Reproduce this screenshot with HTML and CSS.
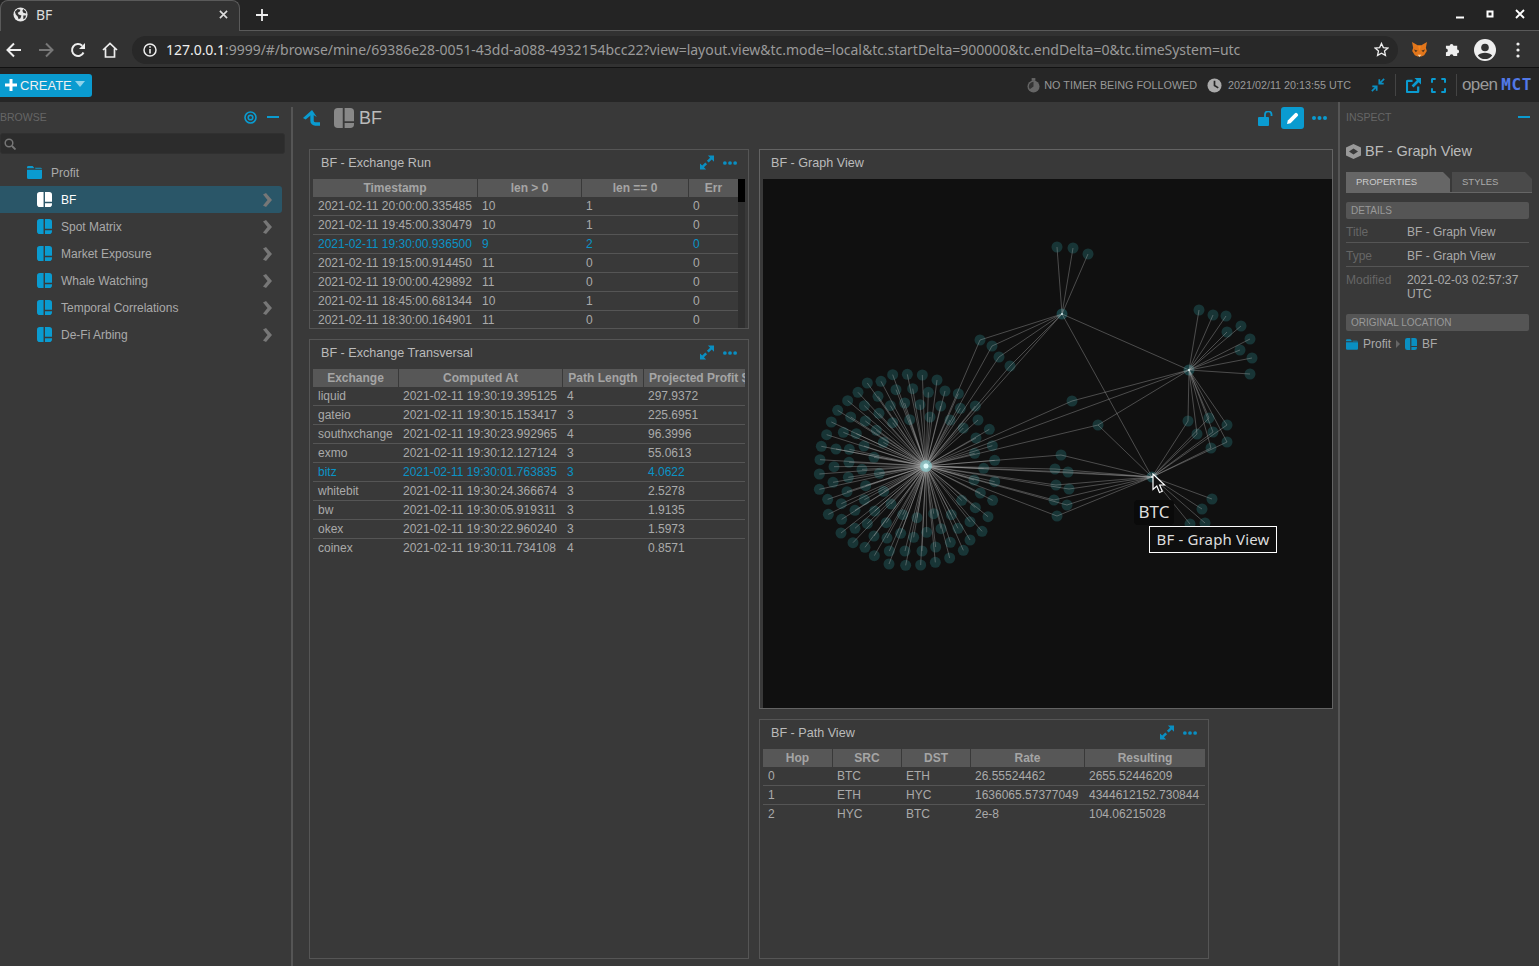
FILE: index.html
```html
<!DOCTYPE html>
<html lang="en">
<head>
<meta charset="utf-8">
<title>BF</title>
<link rel="stylesheet" href="styles.css">
</head>
<body>
<svg class="sprite" width="0" height="0" aria-hidden="true">
  <symbol id="i-layout" viewBox="0 0 16 16">
    <path d="M7 0v16H3a3 3 0 0 1-3-3V3a3 3 0 0 1 3-3zM8.500 0H13a3 3 0 0 1 3 3v7.500H8.500zM8.500 12H16v1a3 3 0 0 1-3 3H8.500z" fill="currentColor"/>
  </symbol>
  <symbol id="i-folder" viewBox="0 0 16 14">
    <path d="M0 1.500A1.500 1.500 0 0 1 1.500 0H6l2 2.500H0zM0 4h16v8.500A1.500 1.500 0 0 1 14.500 14h-13A1.500 1.500 0 0 1 0 12.500zM8.500 2H14.500A1.500 1.500 0 0 1 16 3H9z" fill="currentColor"/>
  </symbol>
  <symbol id="i-chevron" viewBox="0 0 10 14">
    <path d="M1 1.500l3-1.500 6 7-6 7-3-1.500 4.500-5.500z" fill="currentColor"/>
  </symbol>
  <symbol id="i-expand" viewBox="0 0 16 16">
    <path d="M9 0h7v7l-2.500-2.500-3.600 3.600-2-2 3.600-3.600zM7 16H0V9l2.500 2.500 3.600-3.600 2 2-3.600 3.600z" fill="currentColor"/>
  </symbol>
  <symbol id="i-dots" viewBox="0 0 15 4">
    <circle cx="2" cy="2" r="2" fill="currentColor"/><circle cx="7.500" cy="2" r="2" fill="currentColor"/><circle cx="13" cy="2" r="2" fill="currentColor"/>
  </symbol>
</svg>

<header class="tabstrip">
  <div class="tab">
    <svg class="favicon" viewBox="0 0 16 16"><circle cx="8" cy="8" r="7.500" fill="#e8e8e8"/><path d="M2 5l3-3 3 1-1 2-2 1 1 2 3 1-1 3-2 1-1-3-2-2zM11 2l3 3v2l-3-1-1-2zM11 9l3 0-1 3-2 1z" fill="#333"/></svg>
    <span class="tab-title">BF</span>
    <svg class="tab-close" viewBox="0 0 10 10"><path d="M1 1l8 8M9 1l-8 8" stroke="#ddd" stroke-width="1.800"/></svg>
  </div>
  <svg class="tab-new" viewBox="0 0 12 12"><path d="M6 0v12M0 6h12" stroke="#eee" stroke-width="1.800"/></svg>
  <div class="winctl">
    <svg viewBox="0 0 10 10"><path d="M1 8.500h8" stroke="#fff" stroke-width="2"/></svg>
    <svg viewBox="0 0 10 10"><rect x="2.500" y="2.500" width="5" height="5" fill="none" stroke="#fff" stroke-width="2"/></svg>
    <svg viewBox="0 0 10 10"><path d="M1 1l8 8M9 1l-8 8" stroke="#fff" stroke-width="1.800"/></svg>
  </div>
</header>

<nav class="toolbar">
  <svg class="tb-ico" viewBox="0 0 16 16"><path d="M15 8H2M8 1.500L1.500 8 8 14.500" fill="none" stroke="#eee" stroke-width="2"/></svg>
  <svg class="tb-ico" viewBox="0 0 16 16"><path d="M1 8h13M8 1.500L14.500 8 8 14.500" fill="none" stroke="#777" stroke-width="2"/></svg>
  <svg class="tb-ico" viewBox="0 0 16 16"><path d="M13.500 10.500A6 6 0 1 1 12.200 3.700" fill="none" stroke="#eee" stroke-width="2"/><path d="M15 1v6H9z" fill="#eee"/></svg>
  <svg class="tb-ico" viewBox="0 0 16 16"><path d="M1 8l7-6.500L15 8M3.500 6.500V15h9V6.500" fill="none" stroke="#eee" stroke-width="1.700"/></svg>
  <div class="omnibox">
    <svg class="omni-info" viewBox="0 0 14 14"><circle cx="7" cy="7" r="6" fill="none" stroke="#eee" stroke-width="1.500"/><path d="M7 6v4.500M7 3.200v1.600" stroke="#eee" stroke-width="1.600"/></svg>
    <span class="url"><span class="url-host">127.0.0.1</span>:9999/#/browse/mine/69386e28-0051-43dd-a088-4932154bcc22?view=layout.view&amp;tc.mode=local&amp;tc.startDelta=900000&amp;tc.endDelta=0&amp;tc.timeSystem=utc</span>
    <svg class="omni-star" viewBox="0 0 16 16"><path d="M8 1.500l2 4.400 4.800.5-3.600 3.200 1 4.700L8 11.900l-4.200 2.400 1-4.700L1.200 6.400 6 5.900z" fill="none" stroke="#eee" stroke-width="1.400"/></svg>
  </div>
  <svg class="ext-fox" viewBox="0 0 18 16"><path d="M1 0l6 3.500h4L17 0l-1.200 6 1 3.500-2.800 4.500-3 1.500H7L4 14 1.200 9.500l1-3.500z" fill="#e2761b"/><path d="M3 8l4 1-2 2zM15 8l-4 1 2 2z" fill="#5a3a1c"/><path d="M7 13.500h4L9 16z" fill="#f5d6b0"/><path d="M7.500 4h3L9 10z" fill="#f6851b"/></svg>
  <svg class="ext-puzzle" viewBox="0 0 16 16"><path d="M1 4h4a2 2 0 1 1 4 0h4v4a2 2 0 1 1 0 4v3H9a2 2 0 1 0-4 0H1v-4a2 2 0 1 0 0-4z" fill="#eee"/></svg>
  <svg class="avatar" viewBox="0 0 22 22"><circle cx="11" cy="11" r="11" fill="#eee"/><circle cx="11" cy="8.500" r="3.800" fill="#333"/><path d="M3.800 16.500c3-3.800 11.400-3.800 14.400 0a9 9 0 0 1-14.400 0z" fill="#333"/></svg>
  <svg class="kebab" viewBox="0 0 4 16"><circle cx="2" cy="2" r="1.600" fill="#eee"/><circle cx="2" cy="8" r="1.600" fill="#eee"/><circle cx="2" cy="14" r="1.600" fill="#eee"/></svg>
</nav>

<div class="apphead">
  <button class="create"><svg class="create-plus" viewBox="0 0 12 12"><path d="M6 0v12M0 6h12" stroke="#fff" stroke-width="3"/></svg>CREATE<span class="create-caret"></span></button>
  <div class="status">
    <svg class="st-timer" viewBox="0 0 14 16"><circle cx="7" cy="9" r="6.500" fill="#666"/><rect x="5" y="0" width="4" height="3" fill="#666"/><path d="M7 9V4a5 5 0 0 0-4 8z" fill="#333"/></svg>
    <span class="st-text st-timer-text">NO TIMER BEING FOLLOWED</span>
    <svg class="st-clock" viewBox="0 0 16 16"><circle cx="8" cy="8" r="7.500" fill="#aaa"/><path d="M8 3v5l4 2.500" fill="none" stroke="#252525" stroke-width="1.800"/></svg>
    <span class="st-text st-date">2021/02/11 20:13:55 UTC</span>
    <svg class="st-ico st-compress" viewBox="0 0 16 16"><path d="M15 1l-5 5M9.500 1.500V6.500h5M1 15l5-5M6.500 14.500V9.500h-5" fill="none" stroke="#0a8fc2" stroke-width="2"/></svg>
    <span class="st-sep st-sep-a"></span>
    <svg class="st-ico st-newtab" viewBox="0 0 16 16"><path d="M7 3H2a1 1 0 0 0-1 1v10a1 1 0 0 0 1 1h10a1 1 0 0 0 1-1V9" fill="none" stroke="#0a9bd0" stroke-width="2.400"/><path d="M9 0h7v7l-2.500-2.500L8 10 6 8l5.500-5.500z" fill="#0a9bd0"/></svg>
    <svg class="st-ico st-full" viewBox="0 0 16 16"><path d="M1 5V2a1 1 0 0 1 1-1h3M11 1h3a1 1 0 0 1 1 1v3M15 11v3a1 1 0 0 1-1 1h-3M5 15H2a1 1 0 0 1-1-1v-3" fill="none" stroke="#0a9bd0" stroke-width="2.200"/></svg>
    <span class="st-sep st-sep-b"></span>
    <span class="logo"><span class="logo-open">open</span><span class="logo-mct">MCT</span></span>
  </div>
</div>

<main class="workspace">
  <aside class="browse">
    <div class="pane-head">
      <span class="pane-label">BROWSE</span>
      <span class="pane-tools">
        <svg class="pane-target" viewBox="0 0 13 13"><circle cx="6.500" cy="6.500" r="5.500" fill="none" stroke="#0a9bd0" stroke-width="1.600"/><circle cx="6.500" cy="6.500" r="2.300" fill="none" stroke="#0a9bd0" stroke-width="1.600"/></svg>
        <span class="pane-min"></span>
      </span>
    </div>
    <div class="search">
      <svg viewBox="0 0 12 12"><circle cx="5" cy="5" r="3.800" fill="none" stroke="#777" stroke-width="1.500"/><path d="M8 8l3.500 3.500" stroke="#777" stroke-width="1.800"/></svg>
    </div>
    <ul class="tree">
      <li class="tree-row tree-root"><svg class="tree-folder"><use href="#i-folder"/></svg><span>Profit</span></li>
      <li class="tree-row tree-item is-selected"><svg class="tree-ico"><use href="#i-layout"/></svg><span class="tree-name">BF</span><svg class="tree-arrow"><use href="#i-chevron"/></svg></li>
      <li class="tree-row tree-item"><svg class="tree-ico"><use href="#i-layout"/></svg><span class="tree-name">Spot Matrix</span><svg class="tree-arrow"><use href="#i-chevron"/></svg></li>
      <li class="tree-row tree-item"><svg class="tree-ico"><use href="#i-layout"/></svg><span class="tree-name">Market Exposure</span><svg class="tree-arrow"><use href="#i-chevron"/></svg></li>
      <li class="tree-row tree-item"><svg class="tree-ico"><use href="#i-layout"/></svg><span class="tree-name">Whale Watching</span><svg class="tree-arrow"><use href="#i-chevron"/></svg></li>
      <li class="tree-row tree-item"><svg class="tree-ico"><use href="#i-layout"/></svg><span class="tree-name">Temporal Correlations</span><svg class="tree-arrow"><use href="#i-chevron"/></svg></li>
      <li class="tree-row tree-item"><svg class="tree-ico"><use href="#i-layout"/></svg><span class="tree-name">De-Fi Arbing</span><svg class="tree-arrow"><use href="#i-chevron"/></svg></li>
    </ul>
  </aside>

  <section class="center">
    <div class="objhead">
      <svg class="obj-back" viewBox="0 0 16 15"><path d="M16 13.200H11.500a3 3 0 0 1-3-3V3" fill="none" stroke="#0a9bd0" stroke-width="3.200"/><path d="M0 7.500L8.500 0 13 6.500 8.500 4 2.500 9z" fill="#0a9bd0"/></svg>
      <svg class="obj-ico"><use href="#i-layout"/></svg>
      <span class="obj-title">BF</span>
      <span class="obj-actions">
        <svg class="obj-lock" viewBox="0 0 15 15"><rect x="0" y="6" width="11" height="9" rx="1" fill="#0a9bd0"/><path d="M7 6V3.500a3 3 0 0 1 6.500 0V5" fill="none" stroke="#0a9bd0" stroke-width="1.800"/></svg>
        <span class="obj-edit"><svg viewBox="0 0 12 12"><path d="M0 12l.8-3.500L8 1.300a1.500 1.500 0 0 1 2.100 0l.6.6a1.500 1.500 0 0 1 0 2.100L3.500 11.200z" fill="#fff"/></svg></span>
        <svg class="obj-dots"><use href="#i-dots"/></svg>
      </span>
    </div>
    <div class="layout">
      <div class="col col-left">
        <article class="frame frame-run">
          <div class="frame-head"><span>BF - Exchange Run</span><span class="frame-tools"><svg class="fr-expand"><use href="#i-expand"/></svg><svg class="fr-dots"><use href="#i-dots"/></svg></span></div>
          <div class="tbl-wrap">
            <table class="tbl tbl-run">
              <thead><tr><th>Timestamp</th><th>len &gt; 0</th><th>len == 0</th><th>Err</th></tr></thead>
              <tbody>
                <tr><td>2021-02-11 20:00:00.335485</td><td>10</td><td>1</td><td>0</td></tr>
                <tr><td>2021-02-11 19:45:00.330479</td><td>10</td><td>1</td><td>0</td></tr>
                <tr class="is-hot"><td>2021-02-11 19:30:00.936500</td><td>9</td><td>2</td><td>0</td></tr>
                <tr><td>2021-02-11 19:15:00.914450</td><td>11</td><td>0</td><td>0</td></tr>
                <tr><td>2021-02-11 19:00:00.429892</td><td>11</td><td>0</td><td>0</td></tr>
                <tr><td>2021-02-11 18:45:00.681344</td><td>10</td><td>1</td><td>0</td></tr>
                <tr><td>2021-02-11 18:30:00.164901</td><td>11</td><td>0</td><td>0</td></tr>
              </tbody>
            </table>
            <div class="scrollbar"><div class="scroll-thumb"></div></div>
          </div>
        </article>
        <article class="frame frame-trans">
          <div class="frame-head"><span>BF - Exchange Transversal</span><span class="frame-tools"><svg class="fr-expand"><use href="#i-expand"/></svg><svg class="fr-dots"><use href="#i-dots"/></svg></span></div>
          <table class="tbl tbl-trans">
            <thead><tr><th>Exchange</th><th>Computed At</th><th>Path Length</th><th>Projected Profit $</th></tr></thead>
            <tbody>
              <tr><td>liquid</td><td>2021-02-11 19:30:19.395125</td><td>4</td><td>297.9372</td></tr>
              <tr><td>gateio</td><td>2021-02-11 19:30:15.153417</td><td>3</td><td>225.6951</td></tr>
              <tr><td>southxchange</td><td>2021-02-11 19:30:23.992965</td><td>4</td><td>96.3996</td></tr>
              <tr><td>exmo</td><td>2021-02-11 19:30:12.127124</td><td>3</td><td>55.0613</td></tr>
              <tr class="is-hot"><td>bitz</td><td>2021-02-11 19:30:01.763835</td><td>3</td><td>4.0622</td></tr>
              <tr><td>whitebit</td><td>2021-02-11 19:30:24.366674</td><td>3</td><td>2.5278</td></tr>
              <tr><td>bw</td><td>2021-02-11 19:30:05.919311</td><td>3</td><td>1.9135</td></tr>
              <tr><td>okex</td><td>2021-02-11 19:30:22.960240</td><td>3</td><td>1.5973</td></tr>
              <tr><td>coinex</td><td>2021-02-11 19:30:11.734108</td><td>4</td><td>0.8571</td></tr>
            </tbody>
          </table>
        </article>
      </div>
      <div class="col col-right">
        <article class="frame frame-graph">
          <div class="frame-head"><span>BF - Graph View</span></div>
          <div class="graph" id="graph">
            <div class="graph-label">BTC</div>
            <svg class="cursor" viewBox="0 0 14 21"><path d="M1 1v15.500l3.800-3.500 2.700 6.500 2.800-1.200-2.700-6.300h5z" fill="#111" stroke="#fff" stroke-width="1.200"/></svg>
            <div class="graph-tip">BF - Graph View</div>
          </div>
        </article>
        <article class="frame frame-path">
          <div class="frame-head"><span>BF - Path View</span><span class="frame-tools"><svg class="fr-expand"><use href="#i-expand"/></svg><svg class="fr-dots"><use href="#i-dots"/></svg></span></div>
          <table class="tbl tbl-path">
            <thead><tr><th>Hop</th><th>SRC</th><th>DST</th><th>Rate</th><th>Resulting</th></tr></thead>
            <tbody>
              <tr><td>0</td><td>BTC</td><td>ETH</td><td>26.55524462</td><td>2655.52446209</td></tr>
              <tr><td>1</td><td>ETH</td><td>HYC</td><td>1636065.57377049</td><td>4344612152.730844</td></tr>
              <tr><td>2</td><td>HYC</td><td>BTC</td><td>2e-8</td><td>104.06215028</td></tr>
            </tbody>
          </table>
        </article>
      </div>
    </div>
  </section>

  <aside class="inspect">
    <div class="pane-head inspect-head">
      <span class="pane-label">INSPECT</span>
      <span class="pane-min"></span>
    </div>
    <div class="ins-title">
      <svg viewBox="0 0 15 15"><path d="M7.500 0L15 3.500v8L7.500 15 0 11.500v-8z" fill="#999"/><path d="M7.500 4.500L12 7.500l-4.500 3L3 7.500z" fill="#393939"/></svg>
      <span>BF - Graph View</span>
    </div>
    <div class="ins-tabs">
      <span class="ins-tab is-on">PROPERTIES</span>
      <span class="ins-tab">STYLES</span>
    </div>
    <div class="ins-band">DETAILS</div>
    <dl class="props">
      <div class="prop"><dt>Title</dt><dd>BF - Graph View</dd></div>
      <div class="prop"><dt>Type</dt><dd>BF - Graph View</dd></div>
      <div class="prop prop-last"><dt>Modified</dt><dd>2021-02-03 02:57:37 UTC</dd></div>
    </dl>
    <div class="ins-band">ORIGINAL LOCATION</div>
    <div class="ins-path">
      <svg class="ip-folder"><use href="#i-folder"/></svg><span>Profit</span>
      <span class="ip-caret"></span>
      <svg class="ip-layout"><use href="#i-layout"/></svg><span>BF</span>
    </div>
  </aside>
</main>
<script src="graph.js"></script>
</body>
</html>
```

FILE: styles.css
```css
* { box-sizing: border-box; }
html, body { margin: 0; height: 100%; overflow: hidden; }
body {
  background: #393939;
  color: #aaa;
  font: 12px "Liberation Sans", Arial, sans-serif;
  display: flex;
  flex-direction: column;
  height: 966px;
}
.sprite { position: absolute; }

/* browser chrome */
.tabstrip {
  height: 31px;
  flex: none;
  background: #242424;
  display: flex;
  align-items: center;
  border-bottom: 1px solid #5a5a5a;
}
.tab {
  width: 240px;
  height: 31px;
  margin-top: 1px;
  background: #323232;
  border-radius: 8px 8px 0 0;
  border: 1px solid #5a5a5a;
  border-bottom: 0;
  display: flex;
  align-items: center;
  padding: 0 0 3px 12px;
  color: #ddd;
  font: 14px "Noto Sans", sans-serif;
}
.favicon { width: 15px; height: 15px; }
.tab-title { margin-left: 8px; flex: 1; }
.tab-close { width: 9px; height: 9px; margin-right: 11px; }
.tab-new { width: 12px; height: 12px; margin-left: 16px; }
.winctl {
  margin-left: auto;
  margin-bottom: 2px;
  display: flex;
  gap: 20px;
  padding-right: 14px;
}
.winctl svg { width: 10px; height: 10px; }

.toolbar {
  height: 37px;
  flex: none;
  background: #323232;
  display: flex;
  align-items: center;
  padding: 1px 0 0 6px;
  border-bottom: 1px solid #111;
}
.tb-ico { width: 16px; height: 16px; margin-right: 16px; flex: none; }
.omnibox {
  width: 1266px;
  height: 28px;
  margin-left: -2px;
  background: #282828;
  border-radius: 14px;
  display: flex;
  align-items: center;
  padding-left: 11px;
  color: #9a9a9a;
  font: 14px/28px "Noto Sans", sans-serif;
  flex: none;
}
.omni-info { width: 14px; height: 14px; margin-right: 9px; flex: none; }
.url { white-space: nowrap; padding-top: 1px; letter-spacing: -.03px; }
.url-host { color: #eee; }
.omni-star { width: 15px; height: 15px; margin-left: auto; margin-right: 9px; }
.ext-fox { width: 17px; height: 15px; margin-left: 13px; flex: none; }
.ext-puzzle { width: 15px; height: 15px; margin-left: 17px; flex: none; }
.avatar { width: 22px; height: 22px; margin-left: 14px; flex: none; }
.kebab { width: 4px; height: 16px; margin-left: 20px; flex: none; }

/* app header */
.apphead {
  height: 34px;
  flex: none;
  background: #262626;
  display: flex;
  align-items: center;
  justify-content: space-between;
}
.create {
  width: 92px;
  height: 23px;
  border: 0;
  padding: 0 0 0 5px;
  background: #0a9bd0;
  border-radius: 0 3px 3px 0;
  color: #f0f0f0;
  font: 13px "Liberation Sans", sans-serif;
  display: flex;
  align-items: center;
}
.create-plus { width: 12px; height: 12px; margin-right: 3px; flex: none; }
.create-caret {
  width: 0; height: 0; margin: -3px 0 0 3px;
  border: 5px solid transparent;
  border-top: 6px solid #8fd3ea;
  border-bottom: 0;
}
.status { display: flex; align-items: center; padding-right: 7px; }
.st-text { font-size: 10.800px; color: #999; }
.st-date { font-size: 10.750px; }
.st-timer { width: 13px; height: 15px; margin-right: 4px; }
.st-timer-text { margin-right: 10px; }
.st-clock { width: 15px; height: 15px; margin-right: 6px; }
.st-ico { width: 14px; height: 14px; }
.st-compress { margin-left: 20px; }
.st-newtab { width: 15px; height: 15px; }
.st-full { width: 15px; height: 15px; margin-left: 10px; }
.st-sep { width: 1px; height: 22px; background: #444; margin: 0 10px; }
.st-sep-b { margin: 0 5px 0 10px; }
.logo { width: 70px; display: flex; align-items: center; justify-content: space-between; }
.logo-open { color: #9a9a9a; font: 17px/18px "Liberation Sans", sans-serif; letter-spacing: -.6px; }
.logo-mct { color: #5279e8; font: bold 16px/18px "DejaVu Sans Mono", monospace; letter-spacing: .6px; }

/* workspace */
.workspace { flex: 1; display: flex; min-height: 0; }

.browse {
  width: 293px;
  flex: none;
  padding-right: 2px;
  border-right: 2px solid #555;
  margin-top: 5px;
}
.pane-head {
  height: 20px;
  display: flex;
  align-items: center;
  justify-content: space-between;
}
.pane-label { font-size: 10.500px; color: #666; }
.pane-tools { display: flex; align-items: center; gap: 10px; padding-right: 10px; }
.pane-target { width: 13px; height: 13px; }
.pane-min { width: 12px; height: 2px; background: #0a9bd0; }
.search {
  height: 21px;
  width: 285px;
  margin-top: 6px;
  background: #2c2c2c;
  border: 1px solid #303030;
  border-radius: 3px;
  display: flex;
  align-items: center;
  padding-left: 3px;
}
.search svg { width: 12px; height: 12px; }
.tree { list-style: none; margin: 5px 0 0; padding: 0; width: 282px; }
.tree-row { height: 27px; display: flex; align-items: center; }
.tree-root { padding-left: 27px; }
.tree-folder { width: 15px; height: 15px; color: #0a9bd0; margin-right: 9px; }
.tree-item { padding-left: 37px; border-radius: 0 3px 3px 0; }
.tree-ico { width: 15px; height: 15px; color: #0a9bd0; margin-right: 9px; flex: none; }
.tree-name { flex: 1; }
.tree-arrow { width: 10px; height: 14px; color: #777; margin-right: 10px; }
.is-selected { background: #2a5668; color: #fff; }
.is-selected .tree-ico { color: #fff; }

.center { flex: none; width: 1045px; overflow: hidden; min-width: 0; }
.objhead {
  height: 30px;
  margin-top: 1px;
  display: flex;
  align-items: center;
  padding-left: 10px;
}
.obj-back { width: 17px; height: 16px; }
.obj-ico { width: 20px; height: 20px; color: #888; margin-left: 14px; }
.obj-title { font-size: 18px; color: #bbb; margin-left: 5px; }
.obj-actions { margin-left: auto; display: flex; align-items: center; padding-right: 11px; }
.obj-lock { width: 15px; height: 15px; }
.obj-edit {
  width: 23px; height: 22px; margin-left: 8px;
  background: #0a9bd0; border-radius: 3px;
  display: flex; align-items: center; justify-content: center;
}
.obj-edit svg { width: 12px; height: 12px; }
.obj-dots { width: 15px; height: 4px; color: #0a9bd0; margin-left: 8px; }

.layout { display: flex; gap: 10px; padding: 16px 0 0 16px; }
.col { display: flex; flex-direction: column; gap: 10px; flex: none; }
.col-left { width: 440px; }
.col-right { width: 574px; }

.frame {
  border: 1px solid #555;
  padding: 0 3px;
  overflow: hidden;
  flex: none;
}
.frame-run { height: 180px; }
.frame-trans { height: 620px; }
.frame-graph { height: 560px; width: 574px; border-color: #636363; }
.frame-path { height: 240px; width: 450px; }
.frame-head {
  height: 29px;
  display: flex;
  align-items: center;
  justify-content: space-between;
  padding: 0 8px 4px;
  font-size: 12.600px;
  color: #bbb;
}
.frame-tools { display: flex; align-items: center; gap: 9px; }
.fr-expand { width: 14px; height: 15px; color: #0a8fc2; }
.fr-dots { width: 14px; height: 4px; color: #0a8fc2; }

.tbl-wrap { display: flex; }
.tbl {
  table-layout: fixed;
  border-collapse: separate;
  border-spacing: 0;
  flex: none;
}
.tbl th {
  height: 18px;
  padding: 0 5px;
  background: #575757;
  color: #a5a5a5;
  font-weight: bold;
  border-right: 1px solid #393939;
  overflow: hidden;
  white-space: nowrap;
  text-align: center;
}
.tbl th:last-child { border-right: 0; }
.tbl td {
  height: 19px;
  padding: 0 0 0 4px;
  border-bottom: 1px solid #555;
  white-space: nowrap;
  overflow: hidden;
}
.tbl td:first-child { padding-left: 5px; }
.tbl-trans tbody tr:last-child td,
.tbl-path tbody tr:last-child td { border-bottom-color: transparent; }
.is-hot td { color: #0a93c6; }

.tbl-run { width: 425px; }
.tbl-run th:nth-child(1) { width: 165px; }
.tbl-run th:nth-child(2) { width: 104px; }
.tbl-run th:nth-child(3) { width: 107px; }
.tbl-run th:nth-child(4) { width: 49px; }
.scrollbar { width: 7px; height: 150px; background: #2f2f2f; flex: none; }
.scroll-thumb { height: 23px; background: #000; }

.tbl-trans { width: 432px; }
.tbl-trans th:nth-child(1) { width: 86px; }
.tbl-trans th:nth-child(2) { width: 164px; }
.tbl-trans th:nth-child(3) { width: 81px; }
.tbl-trans th:nth-child(4) { width: 101px; text-align: left; }

.tbl-path { width: 442px; }
.tbl-path th:nth-child(1) { width: 70px; }
.tbl-path th:nth-child(2) { width: 69px; }
.tbl-path th:nth-child(3) { width: 69px; }
.tbl-path th:nth-child(4) { width: 114px; }
.tbl-path th:nth-child(5) { width: 120px; }

.graph {
  position: relative;
  width: 569px;
  height: 529px;
  background: #101010;
}
.graph svg.net { display: block; position: absolute; inset: 0; }
.graph-label {
  position: absolute;
  left: 371px; top: 321px;
  width: 40px; height: 25px;
  background: #0a0a0a;
  border-radius: 4px;
  color: #ddd;
  font: 17px/23px "Noto Sans", sans-serif;
  text-align: center;
}
.cursor { position: absolute; left: 389px; top: 294px; width: 14px; height: 21px; }
.graph-tip {
  position: absolute;
  left: 386px; top: 347px;
  width: 128px; height: 27px;
  border: 1px solid #fff;
  background: #0e0e0e;
  color: #ddd;
  font: 15px/25px "Noto Sans", sans-serif;
  letter-spacing: .15px;
  text-align: center;
}

/* inspector */
.inspect { flex: 1; padding: 5px 10px 0 6px; border-left: 2px solid #555; }
.inspect-head { padding-right: 2px; }
.ins-title { display: flex; align-items: center; margin-top: 14px; font-size: 14.500px; color: #bbb; height: 20px; }
.ins-title svg { width: 15px; height: 15px; margin-right: 4px; }
.ins-tabs { display: flex; gap: 2px; margin-top: 11px; width: 186px; border-bottom: 1px solid #666; height: 21px; }
.ins-tab {
  height: 20px;
  font-size: 9.500px;
  line-height: 20px;
  padding-left: 10px;
  background: #4a4a4a;
  clip-path: polygon(0 0, calc(100% - 7px) 0, 100% 7px, 100% 100%, 0 100%);
  width: 80px;
}
.ins-tab.is-on { width: 104px; background: #666; color: #ccc; }
.ins-band {
  height: 17px;
  width: 183px;
  margin-top: 9px;
  padding-left: 5px;
  background: #555;
  border-radius: 2px;
  font-size: 10px;
  line-height: 17px;
  color: #999;
}
.props { margin: 0; width: 183px; }
.prop { display: flex; padding: 6px 0 5px; border-bottom: 1px solid #555; line-height: 14px; height: 24px; }
.prop-last { border-bottom: 0; height: auto; padding-bottom: 4px; }
.prop dt { width: 61px; color: #666; flex: none; }
.prop dd { margin: 0; color: #aaa; }
.ins-path { display: flex; align-items: center; margin-top: 6px; height: 14px; }
.ip-folder { width: 12px; height: 11px; color: #0a8fc2; margin-right: 5px; }
.ip-layout { width: 12px; height: 12px; color: #0a8fc2; margin-right: 5px; }
.ip-caret { width: 0; height: 0; margin: 0 5px; border: 4px solid transparent; border-left: 4px solid #666; border-right: 0; }
```

FILE: graph.js
```js
// Node positions of the force-directed graph, in page pixels.
var CANVAS = { x: 763, y: 179, w: 569, h: 529 };
var HUB = { c: [926, 466], a: [1062, 314], b: [1189, 370], btc: [1152, 477] };

// Leaves of the large star, read in 3x crop coordinates (origin 800,360).
var starRaw = [278,44,322,43,367,45,411,60,202,69,243,64,288,89,338,86,385,97,435,93,475,101,174,97,234,109,143,122,193,137,271,137,314,129,360,134,422,138,481,145,526,138,113,151,152,171,237,160,329,179,390,171,450,180,534,180,94,186,196,183,278,188,490,204,568,208,80,224,130,217,169,221,229,211,528,234,64,259,108,267,148,268,192,258,250,247,577,257,524,280,60,299,147,307,222,292,584,301,102,320,186,328,551,325,58,342,145,352,238,340,99,367,197,377,522,360,584,365,58,388,141,395,251,394,541,399,83,418,124,431,193,419,485,421,578,421,85,463,165,451,273,432,526,443,125,478,224,453,308,464,351,473,401,461,454,464,564,470,165,505,202,491,259,488,510,485,123,519,222,528,302,520,380,517,423,506,474,505,546,514,159,548,261,534,341,532,451,547,510,540,195,562,268,573,315,573,366,573,407,561,490,571,223,587,267,612,317,616,362,615,406,607,449,594];

var groups = [
  { at: [[1057,247],[1073,248],[1088,254]], to: ["a"] },
  { at: [[980,340],[992,346],[999,357],[1010,366]], to: ["a", "c"] },
  { at: [[1199,310],[1213,315],[1226,316],[1227,332],[1241,326],[1250,339],[1240,350],[1252,358],[1250,374]], to: ["b"] },
  { at: [[1188,421],[1209,418],[1197,434],[1213,432],[1227,425],[1227,442],[1211,448]], to: ["b", "btc"] },
  { at: [[1212,499],[1202,509],[1205,523],[1190,524]], to: ["btc"] },
  { at: [[1061,455],[1055,469],[1068,472],[1056,485],[1069,489],[1054,500],[1067,505],[1057,516]], to: ["c", "btc"] },
  { at: [[1072,401]], to: ["c", "b"] },
  { at: [[1098,425]], to: ["c", "b", "btc"] }
];
var star = [];
for (var i = 0; i < starRaw.length; i += 2) {
  star.push([800 + starRaw[i] / 3, 360 + starRaw[i + 1] / 3]);
}
groups.push({ at: star, to: ["c"] });

var hubEdges = [["a", "b"], ["a", "btc"], ["a", "c"], ["b", "c"], ["c", "btc"]];

var NS = "http://www.w3.org/2000/svg";
var svg = document.createElementNS(NS, "svg");
svg.setAttribute("class", "net");
svg.setAttribute("width", CANVAS.w);
svg.setAttribute("height", CANVAS.h);
svg.setAttribute("viewBox", [CANVAS.x, CANVAS.y, CANVAS.w, CANVAS.h].join(" "));

function el(name, attrs) {
  var e = document.createElementNS(NS, name);
  for (var k in attrs) e.setAttribute(k, attrs[k]);
  svg.appendChild(e);
  return e;
}
function edge(p, q) {
  el("line", { x1: p[0], y1: p[1], x2: q[0], y2: q[1], stroke: "#b8b8b8", "stroke-opacity": 0.36, "stroke-width": 1 });
}
function node(p, r, o) {
  el("circle", { cx: p[0], cy: p[1], r: r, fill: "#2a8a90", "fill-opacity": o });
}

groups.forEach(function (g) {
  g.at.forEach(function (p) {
    node(p, 5.5, 0.3);
  });
});
["a", "b", "btc", "c"].forEach(function (h) { node(HUB[h], 5.5, 0.4); });
groups.forEach(function (g) {
  g.at.forEach(function (p) {
    g.to.forEach(function (h) { edge(p, HUB[h]); });
  });
});
hubEdges.forEach(function (e) { edge(HUB[e[0]], HUB[e[1]]); });

el("circle", { cx: HUB.c[0], cy: HUB.c[1], r: 6, fill: "#7fd8dc", "fill-opacity": 0.5 });
el("circle", { cx: HUB.c[0], cy: HUB.c[1], r: 2.5, fill: "#e0fbfb" });
["a", "b", "btc"].forEach(function (h) {
  el("circle", { cx: HUB[h][0], cy: HUB[h][1], r: 1, fill: "#cfeeee" });
});

var host = document.getElementById("graph");
host.insertBefore(svg, host.firstChild);
```
